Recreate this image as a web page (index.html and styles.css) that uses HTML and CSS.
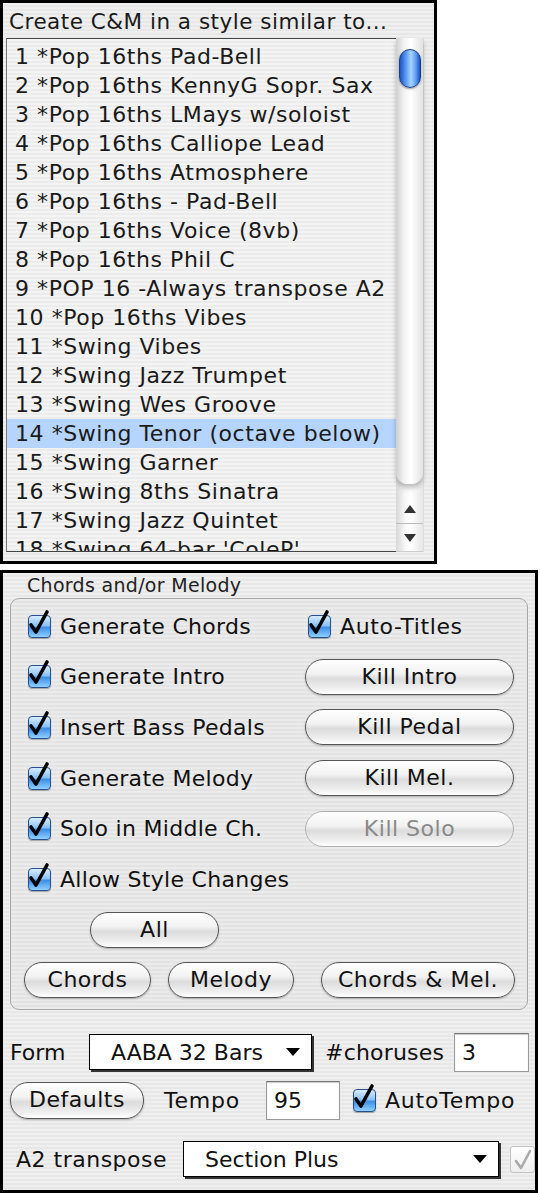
FILE: index.html
```html
<!DOCTYPE html>
<html>
<head>
<meta charset="utf-8">
<link rel="stylesheet" href="styles.css">
</head>
<body>
<div class="panel top-panel">
  <div class="title">Create C&amp;M in a style similar to...</div>
  <div class="list-wrap">
    <div class="list">
      <div class="row">1 *Pop 16ths Pad-Bell</div>
      <div class="row">2 *Pop 16ths KennyG Sopr. Sax</div>
      <div class="row">3 *Pop 16ths LMays w/soloist</div>
      <div class="row">4 *Pop 16ths Calliope Lead</div>
      <div class="row">5 *Pop 16ths Atmosphere</div>
      <div class="row">6 *Pop 16ths - Pad-Bell</div>
      <div class="row">7 *Pop 16ths Voice (8vb)</div>
      <div class="row">8 *Pop 16ths Phil C</div>
      <div class="row">9 *POP 16 -Always transpose A2</div>
      <div class="row">10 *Pop 16ths Vibes</div>
      <div class="row">11 *Swing Vibes</div>
      <div class="row">12 *Swing Jazz Trumpet</div>
      <div class="row">13 *Swing Wes Groove</div>
      <div class="row selected">14 *Swing Tenor (octave below)</div>
      <div class="row">15 *Swing Garner</div>
      <div class="row">16 *Swing 8ths Sinatra</div>
      <div class="row">17 *Swing Jazz Quintet</div>
      <div class="row">18 *Swing 64-bar 'ColeP'</div>
    </div>
    <div class="scrollbar">
      <div class="track">
        <div class="thumb"></div>
      </div>
      <div class="arrow up"><svg width="14" height="10" viewBox="0 0 14 10"><path d="M7 1 L13 9 L1 9 Z" fill="#333"/></svg></div>
      <div class="arrow down"><svg width="14" height="10" viewBox="0 0 14 10"><path d="M1 1 L13 1 L7 9 Z" fill="#333"/></svg></div>
    </div>
  </div>
</div>

<div class="panel bottom-panel">
  <div class="group-label">Chords and/or Melody</div>
  <div class="group">
    <div class="grow">
      <label class="check"><span class="box"><svg width="26" height="30" viewBox="0 0 26 30"><path d="M5 18 L10 25 L21 5" fill="none" stroke="#000" stroke-width="3.6" stroke-linecap="round" stroke-linejoin="round"/></svg></span>Generate Chords</label>
      <label class="check right"><span class="box"><svg width="26" height="30" viewBox="0 0 26 30"><path d="M5 18 L10 25 L21 5" fill="none" stroke="#000" stroke-width="3.6" stroke-linecap="round" stroke-linejoin="round"/></svg></span>Auto-Titles</label>
    </div>
    <div class="grow">
      <label class="check"><span class="box"><svg width="26" height="30" viewBox="0 0 26 30"><path d="M5 18 L10 25 L21 5" fill="none" stroke="#000" stroke-width="3.6" stroke-linecap="round" stroke-linejoin="round"/></svg></span>Generate Intro</label>
      <button class="btn wide">Kill Intro</button>
    </div>
    <div class="grow">
      <label class="check"><span class="box"><svg width="26" height="30" viewBox="0 0 26 30"><path d="M5 18 L10 25 L21 5" fill="none" stroke="#000" stroke-width="3.6" stroke-linecap="round" stroke-linejoin="round"/></svg></span>Insert Bass Pedals</label>
      <button class="btn wide">Kill Pedal</button>
    </div>
    <div class="grow">
      <label class="check"><span class="box"><svg width="26" height="30" viewBox="0 0 26 30"><path d="M5 18 L10 25 L21 5" fill="none" stroke="#000" stroke-width="3.6" stroke-linecap="round" stroke-linejoin="round"/></svg></span>Generate Melody</label>
      <button class="btn wide">Kill Mel.</button>
    </div>
    <div class="grow">
      <label class="check"><span class="box"><svg width="26" height="30" viewBox="0 0 26 30"><path d="M5 18 L10 25 L21 5" fill="none" stroke="#000" stroke-width="3.6" stroke-linecap="round" stroke-linejoin="round"/></svg></span>Solo in Middle Ch.</label>
      <button class="btn wide disabled">Kill Solo</button>
    </div>
    <div class="grow">
      <label class="check"><span class="box"><svg width="26" height="30" viewBox="0 0 26 30"><path d="M5 18 L10 25 L21 5" fill="none" stroke="#000" stroke-width="3.6" stroke-linecap="round" stroke-linejoin="round"/></svg></span>Allow Style Changes</label>
    </div>
    <div class="grow center-row">
      <button class="btn all">All</button>
    </div>
    <div class="grow btn-row">
      <button class="btn chords">Chords</button>
      <button class="btn melody">Melody</button>
      <button class="btn cm">Chords &amp; Mel.</button>
    </div>
  </div>

  <div class="frow frow1">
    <span class="lbl form-lbl">Form</span>
    <div class="popup form-pop"><span>AABA 32 Bars</span><svg width="16" height="10" viewBox="0 0 16 10"><path d="M1 1 L15 1 L8 9 Z" fill="#000"/></svg></div>
    <span class="lbl ch-lbl">#choruses</span>
    <div class="field ch-field">3</div>
  </div>
  <div class="frow frow2">
    <button class="btn defaults">Defaults</button>
    <span class="lbl tempo-lbl">Tempo</span>
    <div class="field tempo-field">95</div>
    <label class="check at"><span class="box"><svg width="26" height="30" viewBox="0 0 26 30"><path d="M5 18 L10 25 L21 5" fill="none" stroke="#000" stroke-width="3.6" stroke-linecap="round" stroke-linejoin="round"/></svg></span>AutoTempo</label>
  </div>
  <div class="frow frow3">
    <span class="lbl a2-lbl">A2 transpose</span>
    <div class="popup a2-pop"><span>Section Plus</span><svg width="16" height="10" viewBox="0 0 16 10"><path d="M1 1 L15 1 L8 9 Z" fill="#000"/></svg></div>
    <span class="dis-box"><svg width="24" height="26" viewBox="0 0 24 26"><path d="M5 14 L10 21 L19 4" fill="none" stroke="#aaa" stroke-width="2.6" stroke-linecap="round" stroke-linejoin="round"/></svg></span>
  </div>
</div>
</body>
</html>
```

FILE: styles.css
```css
* { box-sizing: border-box; }
html, body { margin: 0; padding: 0; background: #fff; }
body {
  font-family: "DejaVu Sans", "Noto Sans", sans-serif;
  color: #111;
  width: 540px;
  height: 1193px;
  overflow: hidden;
}

.panel {
  border: 3px solid #000;
  background: repeating-linear-gradient(to bottom, #efefef 0, #efefef 2px, #e7e7e7 2px, #e7e7e7 4px);
}

.top-panel {
  width: 437px;
  height: 564px;
  padding: 0 0 0 3px;
}

.title {
  height: 35px;
  font-size: 21.5px;
  letter-spacing: 0.5px;
  line-height: 35px;
  padding-left: 3px;
  padding-top: 1px;
  white-space: nowrap;
  color: #1a1a1a;
}

.list-wrap {
  display: flex;
  height: 514px;
}

.list {
  width: 390px;
  border-top: 1.5px solid #444;
  border-left: 1px solid #777;
  border-bottom: 1.5px solid #444;
  padding-top: 3px;
  overflow: hidden;
  background: repeating-linear-gradient(to bottom, #f4f4f4 0, #f4f4f4 2px, #ececec 2px, #ececec 4px);
}

.row {
  height: 29px;
  line-height: 29px;
  font-size: 22px;
  letter-spacing: 0.55px;
  padding-left: 8px;
  white-space: nowrap;
  color: #1a1a1a;
}

.row.selected { background: #b5d5ff; }

.scrollbar {
  width: 28px;
  display: flex;
  flex-direction: column;
  border-right: 1px solid #ddd;
  background: linear-gradient(to right, #d8d8d8, #f8f8f8 35%, #ffffff 55%, #e6e6e6);
}

.track {
  flex: 1;
  padding: 11px 2px 0 3px;
  border-radius: 0 0 12px 12px;
  background: linear-gradient(to right, #cfcfcf, #f3f3f3 30%, #ffffff 55%, #e2e2e2);
  box-shadow: 0 4px 5px rgba(0,0,0,0.25);
}

.thumb {
  height: 39px;
  border-radius: 12px;
  border: 1px solid #1b3f8a;
  background: linear-gradient(to right, #1e52c8 0%, #4d8fee 25%, #a8d4ff 55%, #5b9cf0 80%, #1c4fc0 100%);
  box-shadow: 0 1px 2px rgba(0,0,0,0.4);
}

.arrow {
  height: 29px;
  display: flex;
  align-items: center;
  justify-content: center;
}
.arrow.up { margin-top: 10px; border-bottom: 1px solid #bbb; height: 30px; }
.arrow.down { height: 28px; border-bottom: 1px solid #ccc; }

/* bottom panel */
.bottom-panel {
  margin-top: 6px;
  width: 538px;
  height: 623px;
  padding: 0 7px 0 7px;
}

.group-label {
  font-size: 19px;
  letter-spacing: 0.3px;
  height: 25px;
  line-height: 24px;
  padding-left: 17px;
  color: #222;
  white-space: nowrap;
}

.group {
  height: 412px;
  border: 1px solid #a8a8a8;
  border-radius: 9px;
  padding: 2px 0 0 17px;
  background: repeating-linear-gradient(to bottom, #ebebeb 0, #ebebeb 2px, #e3e3e3 2px, #e3e3e3 4px);
}

.grow {
  height: 50.6px;
  display: flex;
  align-items: center;
}

.check {
  display: flex;
  align-items: center;
  flex: none;
  font-size: 22px;
  letter-spacing: 0.3px;
  color: #111;
  width: 280px;
  white-space: nowrap;
}
.check.right { width: auto; letter-spacing: 0.6px; }

.box {
  position: relative;
  width: 23px;
  height: 23px;
  margin-right: 9px;
  border-radius: 4px;
  border: 1px solid #27508f;
  background: linear-gradient(to bottom, #d8ecff 0%, #8cc2f6 45%, #3e8fe4 55%, #8fd0ff 100%);
  box-shadow: 0 1px 1px rgba(0,0,0,0.3);
  flex: none;
}
.box svg {
  position: absolute;
  left: -3px;
  top: -9px;
}

.btn {
  font-family: inherit;
  font-size: 22px;
  letter-spacing: 0.5px;
  color: #111;
  height: 36px;
  border-radius: 18px;
  border: 1.5px solid #555;
  background: linear-gradient(to bottom, #ffffff 0%, #f2f2f2 40%, #dcdcdc 55%, #f0f0f0 85%, #ffffff 100%);
  box-shadow: 0 1px 2px rgba(0,0,0,0.25);
  padding: 0;
  line-height: 32px;
  white-space: nowrap;
  flex: none;
}

.btn.wide { width: 209px; margin-left: -3px; }
.btn.disabled { color: #8a8a8a; border-color: #b0b0b0; box-shadow: none; }

.center-row { padding-left: 62px; }
.btn.all { width: 129px; }

.btn-row { margin-left: -4px; }
.btn.chords { width: 127px; }
.btn.melody { width: 126px; margin-left: 17px; }
.btn.cm { width: 194px; margin-left: 27px; }

.frow {
  display: flex;
  align-items: center;
}
.frow1 { height: 44px; margin-top: 20px; }
.frow2 { height: 40px; margin-top: 6px; }
.frow3 { height: 40px; margin-top: 19px; margin-left: 6px; }

.lbl { font-size: 22px; letter-spacing: 0.3px; color: #111; white-space: nowrap; flex: none; }
.form-lbl { width: 79px; letter-spacing: 0; }
.ch-lbl { margin-left: 13px; width: 126px; letter-spacing: 0.2px; }
.tempo-lbl { margin-left: 20px; width: 102px; letter-spacing: 0.8px; }
.a2-lbl { width: 167px; letter-spacing: 0.5px; }

.popup {
  display: flex;
  align-items: center;
  justify-content: space-between;
  flex: none;
  height: 36px;
  background: #fff;
  border: 1px solid #000;
  box-shadow: 2px 2px 0 #333;
  font-size: 22px;
  padding: 0 10px 0 21px;
  white-space: nowrap;
}
.form-pop { width: 223px; }
.a2-pop { width: 316px; padding-left: 21px; }

.field {
  height: 39px;
  flex: none;
  background: #fff;
  border: 1px solid #999;
  border-top-color: #777;
  box-shadow: inset 0 1px 1px rgba(0,0,0,0.2);
  font-size: 22px;
  line-height: 37px;
  padding-left: 7px;
}
.ch-field { width: 75px; margin-left: 3px; }
.tempo-field { width: 74px; }

.btn.defaults { width: 134px; height: 37px; }

.check.at { width: auto; margin-left: 13px; letter-spacing: 0.8px; }

.dis-box {
  width: 25px;
  height: 27px;
  margin-left: 11px;
  flex: none;
  border: 1px solid #c4c4c4;
  border-radius: 3px;
  background: linear-gradient(to bottom, #ffffff, #eeeeee);
  position: relative;
}
.dis-box svg { position: absolute; left: 0; top: 0; }
```
